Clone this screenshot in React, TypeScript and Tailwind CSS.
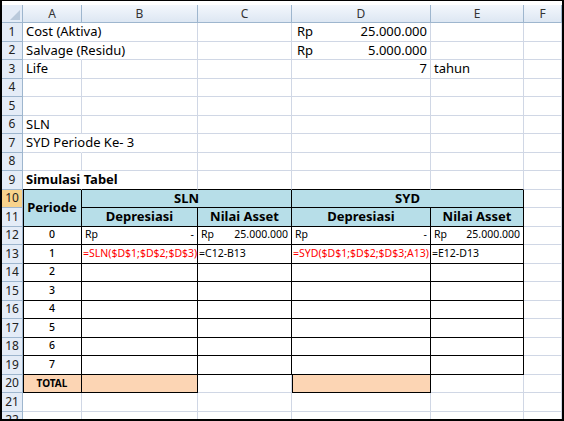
import React from "react";

const G = "border-[#d0d7e5]";
type C = { c?: React.ReactNode; cls?: string };

function Cell({ c, cls = "" }: C) {
  return <div className={`h-[18.5px] border-r border-b flex items-center px-[3px] whitespace-nowrap overflow-visible ${cls}`}>{c}</div>;
}
function RH({ n, cls = "" }: { n: number; cls?: string }) {
  return <div className={`h-[18.5px] border-r border-b border-[#9eb6ce] flex items-center justify-center text-[12px] text-[#222] ${cls || "bg-[#e4ecf7]"}`}>{n}</div>;
}
const RpV = ({ v }: { v: string }) => (
  <div className="flex w-full justify-between text-[10.5px]"><span>Rp</span><span>{v}</span></div>
);
const T = "border-black";

export default function App() {
  const empty = (n: number) => Array.from({ length: n }, (_, i) => <Cell key={i} cls={G} />);
  const rows: React.ReactNode[] = [];
  const simple = (n: number, a: C, b: C, c: C, d: C, e: C) => {
    rows.push(<RH key={"h" + n} n={n} />);
    [a, b, c, d, e].forEach((x, i) => rows.push(<Cell key={n + "-" + i} c={x.c} cls={x.cls ?? G} />));
    rows.push(<Cell key={n + "f"} cls={G} />);
  };
  simple(1, { c: "Cost (Aktiva)", cls: "border-transparent border-b-[#d0d7e5]" }, {}, {}, { c: <div className="flex w-full justify-between"><span className="ml-[2px]">Rp</span><span>25.000.000</span></div> }, {});
  simple(2, { c: "Salvage (Residu)", cls: "border-transparent border-b-[#d0d7e5]" }, {}, {}, { c: <div className="flex w-full justify-between"><span className="ml-[2px]">Rp</span><span>5.000.000</span></div> }, {});
  simple(3, { c: "Life" }, {}, {}, { c: <span className="ml-auto">7</span> }, { c: "tahun" });
  simple(4, {}, {}, {}, {}, {});
  simple(5, {}, {}, {}, {}, {});
  simple(6, { c: "SLN" }, {}, {}, {}, {});
  simple(7, { c: "SYD Periode Ke- 3", cls: "border-transparent border-b-[#d0d7e5]" }, {}, {}, {}, {});
  simple(8, {}, {}, {}, {}, {});
  rows.push(<RH key="h9" n={9} />);
  rows.push(<Cell key="a9" c={<b>Simulasi Tabel</b>} cls="border-r-transparent border-b-black" />);
  rows.push(<Cell key="b9" cls="border-[#d0d7e5] border-b-black" />);
  rows.push(<Cell key="c9" cls="border-[#d0d7e5] border-b-black" />);
  rows.push(<Cell key="d9" cls="border-[#d0d7e5] border-b-black" />);
  rows.push(<Cell key="e9" cls="border-[#d0d7e5] border-b-black" />);
  rows.push(<Cell key="f9" cls={G} />);
  const hdr = "bg-[#b7dee8] border-black font-bold justify-center";
  rows.push(<RH key="h10" n={10} cls="bg-[#f8d38c]" />);
  rows.push(<div key="a10" className={`row-span-2 border-r border-b flex items-center justify-center text-[13px] font-bold shadow-[inset_1px_0_0_#000] ${hdr}`}>Periode</div>);
  rows.push(<Cell key="b10" c="SLN" cls={`col-span-2 ${hdr}`} />);
  rows.push(<Cell key="d10" c="SYD" cls={`col-span-2 ${hdr}`} />);
  rows.push(<Cell key="f10" cls={G} />);
  rows.push(<RH key="h11" n={11} />);
  rows.push(<Cell key="b11" c="Depresiasi" cls={hdr} />);
  rows.push(<Cell key="c11" c="Nilai Asset" cls={hdr} />);
  rows.push(<Cell key="d11" c="Depresiasi" cls={hdr} />);
  rows.push(<Cell key="e11" c="Nilai Asset" cls={hdr} />);
  rows.push(<Cell key="f11" cls={G} />);
  const A = `${T} justify-center text-[10.5px] font-medium shadow-[inset_1px_0_0_#000]`;
  for (let r = 12; r <= 19; r++) {
    const i = r - 12;
    rows.push(<RH key={"h" + r} n={r} />);
    rows.push(<Cell key={"a" + r} c={String(i)} cls={A} />);
    let b: React.ReactNode = null, c: React.ReactNode = null, d: React.ReactNode = null, e: React.ReactNode = null;
    if (r === 12) { b = <RpV v="-" />; c = <RpV v="25.000.000" />; d = <RpV v="-" />; e = <RpV v="25.000.000" />; }
    if (r === 13) {
      b = <span className="text-[10.5px] text-[#ff0000] -ml-[2px]">=SLN($D$1;$D$2;$D$3)</span>;
      c = <span className="text-[10.5px] -ml-[2px]">=C12-B13</span>;
      d = <span className="text-[10.5px] text-[#ff0000] -ml-[2px]">=SYD($D$1;$D$2;$D$3;A13)</span>;
      e = <span className="text-[10.5px] -ml-[2px]">=E12-D13</span>;
    }
    rows.push(<Cell key={"b" + r} c={b} cls={T} />);
    rows.push(<Cell key={"c" + r} c={c} cls={T} />);
    rows.push(<Cell key={"d" + r} c={d} cls={T} />);
    rows.push(<Cell key={"e" + r} c={e} cls={T} />);
    rows.push(<Cell key={"f" + r} cls={G} />);
  }
  rows.push(<RH key="h20" n={20} />);
  rows.push(<Cell key="a20" c="TOTAL" cls={`bg-[#fcd5b4] ${T} justify-center text-[10px] font-bold shadow-[inset_1px_0_0_#000]`} />);
  rows.push(<Cell key="b20" cls={`bg-[#fcd5b4] ${T}`} />);
  rows.push(<Cell key="c20" cls={G} />);
  rows.push(<Cell key="d20" cls={`bg-[#fcd5b4] ${T} shadow-[inset_1px_0_0_#000]`} />);
  rows.push(<Cell key="e20" cls={G} />);
  rows.push(<Cell key="f20" cls={G} />);
  for (const r of [21, 22]) {
    rows.push(<RH key={"h" + r} n={r} />);
    rows.push(...empty(6).map((x, i) => <React.Fragment key={r + "e" + i}>{x}</React.Fragment>));
  }
  const cols = ["A", "B", "C", "D", "E", "F"];
  return (
    <div className="w-[564px] h-[421px] bg-white overflow-hidden border-l-2 border-t border-b-2 border-r-2 border-black pt-[4px] text-[13px] text-black font-['Open_Sans',sans-serif]">
      <div className="grid grid-cols-[21px_59px_116px_94px_139px_93px_1fr]">
        <div className="h-[18px] border-r border-b border-[#9eb6ce] bg-[#e4ecf7] relative">
          <div className="absolute right-[2px] bottom-[2px] w-0 h-0 border-l-[10px] border-l-transparent border-b-[10px] border-b-[#b9c9db]" />
        </div>
        {cols.map((c) => (
          <div key={c} className="h-[18px] border-r border-b border-[#9eb6ce] bg-gradient-to-b from-[#f3f7fc] to-[#dde7f3] flex items-center justify-center text-[12px] text-[#333]">{c}</div>
        ))}
        {rows}
      </div>
    </div>
  );
}
